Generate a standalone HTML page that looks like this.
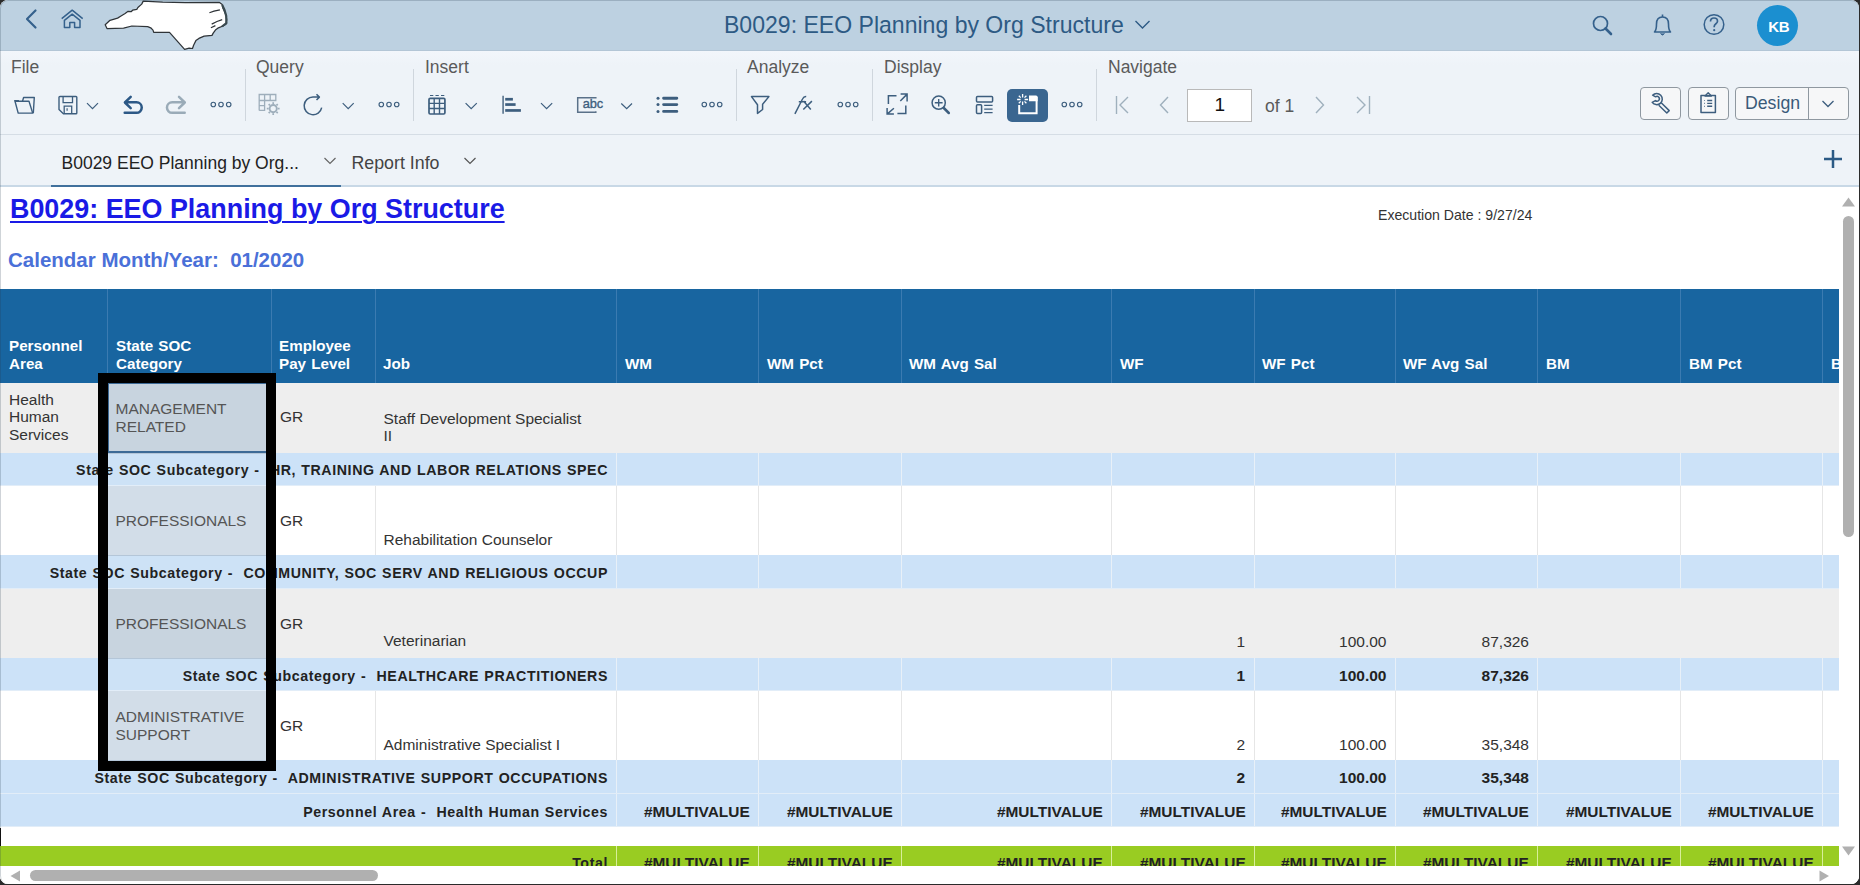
<!DOCTYPE html><html><head><meta charset="utf-8"><style>
*{box-sizing:border-box;margin:0;padding:0}
html,body{width:1860px;height:885px;overflow:hidden;background:#2b2b2b;font-family:"Liberation Sans",sans-serif}
.win{position:absolute;left:0;top:0;width:1859px;height:884px;border-radius:8px;overflow:hidden;background:#fff}
.rim{position:absolute;left:0;top:0;width:1859px;height:884px;border-radius:8px;border-top:1px solid rgba(40,60,80,0.22);border-left:1px solid rgba(40,60,80,0.22);pointer-events:none}
.a{position:absolute}
.t{position:absolute;white-space:nowrap;line-height:1}
svg{position:absolute;overflow:visible}
</style></head><body><div class="win">
<div class="a" style="left:0px;top:0px;width:1860px;height:51px;background:#bdd1e1"></div>
<svg style="left:20px;top:4px" width="24" height="28" viewBox="0 0 24 28"><path d="M15.5 6.5 L7 15 L15.5 23.5" stroke="#35618c" stroke-width="2.2" fill="none" stroke-linecap="round" stroke-linejoin="round"/></svg>
<svg style="left:0px;top:0px" width="120" height="60" viewBox="0 0 120 60"><path d="M61.7 18.6 L72.2 10.2 L82.7 18.6" stroke="#35618c" stroke-width="1.5" fill="none" stroke-linejoin="round"/><path d="M64.4 20.3 L72.2 14.2 L80 20.3 V27.5 H74.6 V22.4 H69.8 V27.5 H64.4 Z" stroke="#35618c" stroke-width="1.5" fill="none" stroke-linejoin="round"/></svg>
<svg style="left:0px;top:0px" width="300" height="60" viewBox="0 0 300 60"><path d="M143.2 1.1 L162.7 2.2 L185.3 2.6 L219.2 2.3 L222.2 4.5 L223 8.3 L226 15 L226.7 19.6 L226 24.1 L223 26 L218.4 27.8 L215.4 30.1 L213.2 33.1 L212 35.4 L204.1 36.1 L198.9 38.4 L195.9 40.6 L193.6 45.2 L192.5 48.5 L189.1 48.2 L184.6 49.3 L169.5 32.4 L153.7 32.4 L153 30.1 L150.7 27.8 L147.7 26.7 L131.9 26 L123.6 28.2 L107 28.6 L105.2 24.8 L110 20.3 L117.6 18.1 L120.6 16.2 L125.1 13.5 L128.1 11.3 L131.1 11.7 L132.6 10.2 L136.8 9.4 L137.9 7.5 L141.7 4.1 Z" fill="#fff" stroke="#2f3438" stroke-width="1.25" stroke-linejoin="round"/><path d="M209.4 12.8 L214 11.2 L219.9 9.8 M211.7 24.1 L217 21.5 L222.2 19.6 M210.9 27.8 L215.4 25.6" stroke="#2f3438" stroke-width="1.2" fill="none"/><path d="M222.2 5 L224.5 10 L226.2 16 L226.4 23 L222 26.5" stroke="#3a4a50" stroke-width="2.2" fill="none"/></svg>
<div class="t" style="left:724px;top:14.09px;font-size:23.05px;color:#2d5a84;font-weight:normal;">B0029: EEO Planning by Org Structure</div>
<svg style="left:1133px;top:18px" width="20" height="14" viewBox="0 0 20 14"><path d="M2.5 3 L9.5 10 L16.5 3" stroke="#2d5a84" stroke-width="1.4" fill="none"/></svg>
<svg style="left:1590px;top:13px" width="26" height="26" viewBox="0 0 26 26"><circle cx="10.5" cy="10.5" r="7" stroke="#35618c" stroke-width="1.7" fill="none"/><path d="M15.5 15.5 L21 21" stroke="#35618c" stroke-width="2.6" stroke-linecap="round"/></svg>
<svg style="left:1650px;top:12px" width="26" height="28" viewBox="0 0 26 28"><path d="M4.5 20 C6.5 18 6.5 16 6.5 12 C6.5 7.5 9 5 12.5 5 C16 5 18.5 7.5 18.5 12 C18.5 16 18.5 18 20.5 20 Z" stroke="#35618c" stroke-width="1.6" fill="none" stroke-linejoin="round"/><path d="M12.5 2.5 V5" stroke="#35618c" stroke-width="1.6"/><path d="M10.5 21.5 Q12.5 24.5 14.5 21.5" fill="#35618c" stroke="#35618c" stroke-width="1"/></svg>
<svg style="left:1700px;top:11px" width="28" height="28" viewBox="0 0 28 28"><circle cx="14" cy="13.5" r="9.8" stroke="#35618c" stroke-width="1.5" fill="none"/><path d="M10.5 10.5 C10.5 8 12 7 14 7 C16.3 7 17.5 8.5 17.5 10.2 C17.5 12.7 14.2 12.8 14.2 15.5 V16.2" stroke="#35618c" stroke-width="1.7" fill="none"/><circle cx="14.2" cy="19.2" r="1.1" fill="#35618c"/></svg>
<div class="a" style="left:1757px;top:5px;width:41px;height:41px;background:#1b8fd0;border-radius:50%"></div>
<div class="t" style="left:1768.3px;top:19.20px;font-size:15px;color:#fff;font-weight:bold;letter-spacing:-0.4px">KB</div>
<div class="a" style="left:0px;top:51px;width:1860px;height:84px;background:linear-gradient(#f2f6fb 0px,#eef3f8 14px)"></div>
<div class="a" style="left:0px;top:50px;width:1860px;height:1px;background:#b3c6d6"></div>
<div class="t" style="left:11px;top:58.59px;font-size:17.5px;color:#5a5a5a;font-weight:normal;">File</div>
<div class="t" style="left:256px;top:58.59px;font-size:17.5px;color:#5a5a5a;font-weight:normal;">Query</div>
<div class="t" style="left:425px;top:58.59px;font-size:17.5px;color:#5a5a5a;font-weight:normal;">Insert</div>
<div class="t" style="left:747px;top:58.59px;font-size:17.5px;color:#5a5a5a;font-weight:normal;">Analyze</div>
<div class="t" style="left:884px;top:58.59px;font-size:17.5px;color:#5a5a5a;font-weight:normal;">Display</div>
<div class="t" style="left:1108px;top:58.59px;font-size:17.5px;color:#5a5a5a;font-weight:normal;">Navigate</div>
<div class="a" style="left:245px;top:69px;width:1px;height:52px;background:#cfd6dd"></div>
<div class="a" style="left:413px;top:69px;width:1px;height:52px;background:#cfd6dd"></div>
<div class="a" style="left:736px;top:69px;width:1px;height:52px;background:#cfd6dd"></div>
<div class="a" style="left:872px;top:69px;width:1px;height:52px;background:#cfd6dd"></div>
<div class="a" style="left:1096px;top:69px;width:1px;height:52px;background:#cfd6dd"></div>
<svg style="left:0px;top:0px" width="1860" height="140" viewBox="0 0 1860 140"><path d="M15 101.3 H29 L32.7 113.1 H18.2 Z" stroke="#3d5e7e" fill="none" stroke-width="1.4" stroke-linejoin="round"/><path d="M14.2 100.6 H19 M22.5 101.3 L23.6 97.5 H34.3 L33.3 113.1" stroke="#3d5e7e" fill="none" stroke-width="1.4" stroke-linejoin="round"/><path d="M60 96.5 H76 Q76.8 96.5 76.8 97.3 V112.9 Q76.8 113.7 76 113.7 H63.4 L59 109.4 V97.3 Q59 96.5 60 96.5 Z" stroke="#3d5e7e" fill="none" stroke-width="1.4" stroke-linejoin="round"/><path d="M63.1 96.5 V102.6 H72.5 V96.5 M64.2 113.7 V106.1 H71.7 V113.7" stroke="#3d5e7e" fill="none" stroke-width="1.3"/><path d="M67.1 108.2 V110.8" stroke="#3d5e7e" stroke-width="1.2"/><path d="M87 103.2 L92.5 108.7 L98 103.2" stroke="#3d5e7e" fill="none" stroke-width="1.2"/><path d="M130.7 96.9 L124.9 102.5 L130.7 108.1 M125 102.3 H136.5 A5.25 5.25 0 0 1 136.5 112.8 H124.7" stroke="#2c5886" fill="none" stroke-width="2.5" stroke-linecap="round" stroke-linejoin="round"/><path d="M179 96.9 L184.8 102.5 L179 108.1 M184.7 102.3 H172.2 A5.25 5.25 0 0 0 172.2 112.8 H184.7" stroke="#9aabb8" fill="none" stroke-width="2.5" stroke-linecap="round" stroke-linejoin="round"/><path d="M259.2 110.4 V94.5 H275.8 V100.5 H259.2 M259.2 105.6 H265 M264.6 94.5 V110.4 H259.2 M270.2 94.5 V100.5" stroke="#9eaebb" fill="none" stroke-width="1.3"/><circle cx="273.2" cy="108.6" r="3.6" stroke="#9eaebb" fill="none" stroke-width="1.9"/><path d="M277.80 108.60 L279.60 108.60" stroke="#9eaebb" stroke-width="1.7"/><path d="M276.45 111.85 L277.73 113.13" stroke="#9eaebb" stroke-width="1.7"/><path d="M273.20 113.20 L273.20 115.00" stroke="#9eaebb" stroke-width="1.7"/><path d="M269.95 111.85 L268.67 113.13" stroke="#9eaebb" stroke-width="1.7"/><path d="M268.60 108.60 L266.80 108.60" stroke="#9eaebb" stroke-width="1.7"/><path d="M269.95 105.35 L268.67 104.07" stroke="#9eaebb" stroke-width="1.7"/><path d="M273.20 104.00 L273.20 102.20" stroke="#9eaebb" stroke-width="1.7"/><path d="M276.45 105.35 L277.73 104.07" stroke="#9eaebb" stroke-width="1.7"/><path d="M313 97 A8.85 8.85 0 1 0 321.7 107.6" stroke="#3d5e7e" fill="none" stroke-width="1.5"/><path d="M313 97 H319.3 M316.5 94.3 L319.4 97.1 L316.5 100" stroke="#3d5e7e" fill="none" stroke-width="1.5" stroke-linejoin="round"/><path d="M342.7 103.2 L348.2 108.7 L353.7 103.2" stroke="#3d5e7e" fill="none" stroke-width="1.2"/><path d="M430 95.5 H433.3 M435.5 95.5 H438.8 M441 95.5 H444.3" stroke="#3d5e7e" stroke-width="1.2"/><rect x="429" y="98.4" width="15.9" height="15.6" rx="1.2" stroke="#3d5e7e" fill="none" stroke-width="1.7"/><path d="M429 103.4 H444.9 M429 108.5 H444.9 M434.2 98.4 V114 M439.5 98.4 V114" stroke="#3d5e7e" stroke-width="1.4"/><path d="M465.6 103.1 L471.2 108.7 L476.8 103.1" stroke="#3d5e7e" fill="none" stroke-width="1.2"/><path d="M503.1 95.7 V113.7" stroke="#5f7a93" stroke-width="1.7"/><rect x="505.2" y="97.9" width="7.7" height="2.7" fill="#3d5e7e"/><rect x="505.2" y="103.2" width="10.4" height="2.7" fill="#3d5e7e"/><rect x="505.2" y="109.1" width="15.7" height="2.7" fill="#3d5e7e"/><path d="M541 103.1 L546.6 108.7 L552.2 103.1" stroke="#3d5e7e" fill="none" stroke-width="1.2"/><path d="M595.8 98.6 V97.7 H577.7 V112.2 H595.8 V111.3" stroke="#5a7189" fill="none" stroke-width="1.5"/><text x="582.8" y="107.8" font-family="Liberation Sans" font-size="12.8" fill="#3d5e7e" stroke="#3d5e7e" stroke-width="0.35" letter-spacing="-0.2">abc</text><path d="M621.3 103.5 L626.7 108.7 L632 103.5" stroke="#3d5e7e" fill="none" stroke-width="1.2"/><circle cx="658" cy="98.3" r="1.5" fill="#3d5e7e"/><circle cx="658" cy="104.6" r="1.5" fill="#3d5e7e"/><circle cx="658" cy="111.4" r="1.5" fill="#3d5e7e"/><path d="M663.6 98.3 H676.8 M663.6 104.6 H676.8 M663.6 111.4 H676.8" stroke="#3d5e7e" stroke-width="2.9" stroke-linecap="round"/><path d="M751.5 96.6 H768.9 L762.6 104.3 V109.5 L757.5 113.4 V104.8 Z" stroke="#3d5e7e" fill="none" stroke-width="1.5" stroke-linejoin="round"/><path d="M794.9 113.8 L802.5 99 Q803.8 96.2 806.2 96.4" stroke="#3d5e7e" fill="none" stroke-width="1.5"/><path d="M798.8 101.8 H806.1 M803.5 100.9 L810.8 109.5 M811.9 101.1 L803.3 109.5" stroke="#3d5e7e" fill="none" stroke-width="1.5"/><path d="M888.4 104.1 V95.8 H896.5 M900.6 94.1 H907.1 V101.5 M907.1 94.1 L900.3 101 M905.8 105.4 V113.5 H897.4 M893.9 114.1 H887.1 V108 M887.1 114.1 L893.9 108.3" stroke="#3d5e7e" fill="none" stroke-width="1.5"/><circle cx="938.7" cy="102.7" r="6.6" stroke="#3d5e7e" fill="none" stroke-width="1.5"/><path d="M934.8 102.7 H942.6 M938.7 98.9 V106.5" stroke="#3d5e7e" fill="none" stroke-width="1.4"/><path d="M943.8 108 L948.8 113" stroke="#3d5e7e" stroke-width="2.5" stroke-linecap="round"/><rect x="976.5" y="96.4" width="16.1" height="5.5" rx="1" stroke="#3d5e7e" fill="none" stroke-width="1.5"/><rect x="976.5" y="104.8" width="5.1" height="8.7" rx="1" stroke="#3d5e7e" fill="none" stroke-width="1.5"/><path d="M984.2 105.4 H992.6 M984.2 109.1 H992.6 M984.2 112.6 H992.6" stroke="#3d5e7e" fill="none" stroke-width="1.4"/><circle cx="213.3" cy="104.5" r="2.25" stroke="#3d5e7e" fill="none" stroke-width="1.15"/><circle cx="221" cy="104.5" r="2.25" stroke="#3d5e7e" fill="none" stroke-width="1.15"/><circle cx="228.7" cy="104.5" r="2.25" stroke="#3d5e7e" fill="none" stroke-width="1.15"/><circle cx="381.3" cy="104.5" r="2.25" stroke="#3d5e7e" fill="none" stroke-width="1.15"/><circle cx="389" cy="104.5" r="2.25" stroke="#3d5e7e" fill="none" stroke-width="1.15"/><circle cx="396.7" cy="104.5" r="2.25" stroke="#3d5e7e" fill="none" stroke-width="1.15"/><circle cx="704.3" cy="104.5" r="2.25" stroke="#3d5e7e" fill="none" stroke-width="1.15"/><circle cx="712" cy="104.5" r="2.25" stroke="#3d5e7e" fill="none" stroke-width="1.15"/><circle cx="719.7" cy="104.5" r="2.25" stroke="#3d5e7e" fill="none" stroke-width="1.15"/><circle cx="840.3" cy="104.5" r="2.25" stroke="#3d5e7e" fill="none" stroke-width="1.15"/><circle cx="848" cy="104.5" r="2.25" stroke="#3d5e7e" fill="none" stroke-width="1.15"/><circle cx="855.7" cy="104.5" r="2.25" stroke="#3d5e7e" fill="none" stroke-width="1.15"/><circle cx="1064.3" cy="104.5" r="2.25" stroke="#3d5e7e" fill="none" stroke-width="1.15"/><circle cx="1072" cy="104.5" r="2.25" stroke="#3d5e7e" fill="none" stroke-width="1.15"/><circle cx="1079.7" cy="104.5" r="2.25" stroke="#3d5e7e" fill="none" stroke-width="1.15"/></svg>
<div class="a" style="left:1007px;top:89px;width:41px;height:33px;background:#3a6690;border-radius:5px"></div>
<svg style="left:0px;top:0px" width="1860" height="140" viewBox="0 0 1860 140"><path d="M1019.2 105 V113.2 H1036.6 V96.6" stroke="#fff" fill="none" stroke-width="2"/><path d="M1029 95.5 H1036.4 L1037.6 97 V101.3 H1029 Z" fill="#fff"/><path d="M1022.6 94 V97.5 M1022.6 101.5 V105 M1017.1 99.5 H1020.6 M1024.6 99.5 H1028.1 M1018.8 95.7 L1020.7 97.6 M1024.5 101.4 L1026.4 103.3 M1026.4 95.7 L1024.5 97.6 M1020.7 101.4 L1018.8 103.3" stroke="#fff" stroke-width="1.3"/></svg>
<svg style="left:1113px;top:94px" width="22" height="22" viewBox="0 0 22 22"><path d="M3.5 2 V20" stroke="#9fb0bd" stroke-width="1.4"/><path d="M15 3 L7 11 L15 19" stroke="#9fb0bd" stroke-width="1.4" fill="none"/></svg>
<svg style="left:1154px;top:94px" width="22" height="22" viewBox="0 0 22 22"><path d="M14 3 L6.5 11 L14 19" stroke="#9fb0bd" stroke-width="1.4" fill="none"/></svg>
<div class="a" style="left:1187px;top:89px;width:65px;height:33px;background:#fff;border:1px solid #b9b9b9"></div>
<div class="t" style="left:1214.5px;top:95.12px;font-size:19px;color:#111;font-weight:normal;">1</div>
<div class="t" style="left:1265px;top:98.09px;font-size:17.5px;color:#5a5a5a;font-weight:normal;">of 1</div>
<svg style="left:1309px;top:94px" width="22" height="22" viewBox="0 0 22 22"><path d="M7 3 L14.5 11 L7 19" stroke="#9fb0bd" stroke-width="1.4" fill="none"/></svg>
<svg style="left:1352px;top:94px" width="22" height="22" viewBox="0 0 22 22"><path d="M5 3 L13 11 L5 19" stroke="#9fb0bd" stroke-width="1.4" fill="none"/><path d="M17.5 2 V20" stroke="#9fb0bd" stroke-width="1.4"/></svg>
<div class="a" style="left:1640px;top:87px;width:41px;height:33px;background:#f6f7f8;border:1px solid #8f98a0;border-radius:4px"></div>
<svg style="left:0px;top:0px" width="1860" height="140" viewBox="0 0 1860 140"><path d="M1652.6 95.2 A5.6 5.6 0 1 1 1652.2 102.4 L1655.4 100.6 A2.4 2.4 0 1 0 1655.6 96.8 Z" stroke="#3d5e7e" fill="none" stroke-width="1.5" stroke-linejoin="round"/><path d="M1661.2 102.8 L1669.2 110.6 L1666.8 113 L1658.8 105.2" stroke="#3d5e7e" fill="none" stroke-width="1.5" stroke-linejoin="round"/></svg>
<div class="a" style="left:1688px;top:87px;width:41px;height:33px;background:#f6f7f8;border:1px solid #8f98a0;border-radius:4px"></div>
<svg style="left:0px;top:0px" width="1860" height="140" viewBox="0 0 1860 140"><path d="M1701 95.6 H1715.4 V112.6 H1701 Z" stroke="#3d5e7e" fill="none" stroke-width="1.5" stroke-linejoin="round"/><path d="M1705 96 L1708.2 92.6 L1711.4 96 Z" stroke="#3d5e7e" fill="none" stroke-width="1.3" stroke-linejoin="round"/><path d="M1704 100.5 H1705 M1704 103.4 H1705 M1704 106.3 H1705" stroke="#7a90a4" stroke-width="1.2"/><path d="M1707.2 100.5 H1712.2 M1707.2 103.4 H1712.2 M1707.2 106.3 H1712.2" stroke="#3d5e7e" stroke-width="1.4"/></svg>
<div class="a" style="left:1735px;top:87px;width:114px;height:33px;background:#f6f7f8;border:1px solid #8f98a0;border-radius:4px"></div>
<div class="a" style="left:1808px;top:88px;width:1px;height:31px;background:#8f98a0"></div>
<div class="t" style="left:1745px;top:94.92px;font-size:17.7px;color:#3a5a78;font-weight:normal;">Design</div>
<svg style="left:1821px;top:99px" width="14" height="10" viewBox="0 0 14 10"><path d="M1.5 2 L7 7.5 L12.5 2" stroke="#3d5e7e" stroke-width="1.3" fill="none"/></svg>
<div class="a" style="left:0px;top:134px;width:1860px;height:1px;background:#d5dde5"></div>
<div class="a" style="left:0px;top:135px;width:1860px;height:51px;background:#eef3f8"></div>
<div class="a" style="left:0px;top:185px;width:1860px;height:2px;background:#c8d8e6"></div>
<div class="t" style="left:61.5px;top:155.39px;font-size:17.5px;color:#222;font-weight:normal;">B0029 EEO Planning by Org...</div>
<svg style="left:323px;top:156px" width="14" height="10" viewBox="0 0 14 10"><path d="M1.5 2 L7 7.5 L12.5 2" stroke="#666" stroke-width="1.2" fill="none"/></svg>
<div class="t" style="left:351.5px;top:155.13px;font-size:17.8px;color:#444;font-weight:normal;">Report Info</div>
<svg style="left:463px;top:156px" width="14" height="10" viewBox="0 0 14 10"><path d="M1.5 2 L7 7.5 L12.5 2" stroke="#555" stroke-width="1.2" fill="none"/></svg>
<div class="a" style="left:51px;top:185px;width:290px;height:2px;background:#40709c"></div>
<svg style="left:1822px;top:148px" width="22" height="22" viewBox="0 0 22 22"><path d="M11 2 V20 M2 11 H20" stroke="#2b5a85" stroke-width="2.5"/></svg>
<div class="a" style="left:0px;top:187px;width:1860px;height:697px;background:#fff"></div>
<div class="t" style="left:10px;top:196.43px;font-size:26.9px;color:#1a1ae6;font-weight:bold;text-decoration:underline;text-decoration-thickness:2px;text-underline-offset:3px">B0029: EEO Planning by Org Structure</div>
<div class="t" style="left:8px;top:249.55px;font-size:20.5px;color:#4a70d8;font-weight:bold;">Calendar Month/Year:&nbsp; 01/2020</div>
<div class="t" style="left:1378px;top:208.46px;font-size:14.1px;color:#333;font-weight:normal;">Execution Date : 9/27/24</div>
<div class="a" style="left:0px;top:289px;width:1839px;height:94px;background:#1865a0"></div>
<div class="a" style="left:107px;top:289px;width:1px;height:94px;background:#3b7bb1"></div>
<div class="a" style="left:271px;top:289px;width:1px;height:94px;background:#3b7bb1"></div>
<div class="a" style="left:375px;top:289px;width:1px;height:94px;background:#3b7bb1"></div>
<div class="a" style="left:616px;top:289px;width:1px;height:94px;background:#3b7bb1"></div>
<div class="a" style="left:758px;top:289px;width:1px;height:94px;background:#3b7bb1"></div>
<div class="a" style="left:901px;top:289px;width:1px;height:94px;background:#3b7bb1"></div>
<div class="a" style="left:1111px;top:289px;width:1px;height:94px;background:#3b7bb1"></div>
<div class="a" style="left:1254px;top:289px;width:1px;height:94px;background:#3b7bb1"></div>
<div class="a" style="left:1395px;top:289px;width:1px;height:94px;background:#3b7bb1"></div>
<div class="a" style="left:1537px;top:289px;width:1px;height:94px;background:#3b7bb1"></div>
<div class="a" style="left:1680px;top:289px;width:1px;height:94px;background:#3b7bb1"></div>
<div class="a" style="left:1822px;top:289px;width:1px;height:94px;background:#3b7bb1"></div>
<div class="t" style="left:9px;top:337.83px;font-size:15.2px;color:#fff;font-weight:bold;word-spacing:1px">Personnel</div>
<div class="t" style="left:9px;top:355.83px;font-size:15.2px;color:#fff;font-weight:bold;word-spacing:1px">Area</div>
<div class="t" style="left:116px;top:337.83px;font-size:15.2px;color:#fff;font-weight:bold;word-spacing:1px">State SOC</div>
<div class="t" style="left:116px;top:355.83px;font-size:15.2px;color:#fff;font-weight:bold;word-spacing:1px">Category</div>
<div class="t" style="left:279px;top:337.83px;font-size:15.2px;color:#fff;font-weight:bold;word-spacing:1px">Employee</div>
<div class="t" style="left:279px;top:355.83px;font-size:15.2px;color:#fff;font-weight:bold;word-spacing:1px">Pay Level</div>
<div class="t" style="left:383px;top:355.83px;font-size:15.2px;color:#fff;font-weight:bold;word-spacing:1px">Job</div>
<div class="t" style="left:625px;top:355.83px;font-size:15.2px;color:#fff;font-weight:bold;word-spacing:1px">WM</div>
<div class="t" style="left:767px;top:355.83px;font-size:15.2px;color:#fff;font-weight:bold;word-spacing:1px">WM Pct</div>
<div class="t" style="left:909px;top:355.83px;font-size:15.2px;color:#fff;font-weight:bold;word-spacing:1px">WM Avg Sal</div>
<div class="t" style="left:1120px;top:355.83px;font-size:15.2px;color:#fff;font-weight:bold;word-spacing:1px">WF</div>
<div class="t" style="left:1262px;top:355.83px;font-size:15.2px;color:#fff;font-weight:bold;word-spacing:1px">WF Pct</div>
<div class="t" style="left:1403px;top:355.83px;font-size:15.2px;color:#fff;font-weight:bold;word-spacing:1px">WF Avg Sal</div>
<div class="t" style="left:1546px;top:355.83px;font-size:15.2px;color:#fff;font-weight:bold;word-spacing:1px">BM</div>
<div class="t" style="left:1689px;top:355.83px;font-size:15.2px;color:#fff;font-weight:bold;word-spacing:1px">BM Pct</div>
<div class="t" style="left:1831px;top:355.83px;font-size:15.2px;color:#fff;font-weight:bold;word-spacing:1px">B</div>
<div class="a" style="left:0px;top:383px;width:1839px;height:70px;background:#eeeeee"></div>
<div class="a" style="left:0px;top:453px;width:1839px;height:33px;background:#cce2f8"></div>
<div class="a" style="left:616px;top:453px;width:1px;height:33px;background:#e8f0f8"></div>
<div class="a" style="left:758px;top:453px;width:1px;height:33px;background:#e8f0f8"></div>
<div class="a" style="left:901px;top:453px;width:1px;height:33px;background:#e8f0f8"></div>
<div class="a" style="left:1111px;top:453px;width:1px;height:33px;background:#e8f0f8"></div>
<div class="a" style="left:1254px;top:453px;width:1px;height:33px;background:#e8f0f8"></div>
<div class="a" style="left:1395px;top:453px;width:1px;height:33px;background:#e8f0f8"></div>
<div class="a" style="left:1537px;top:453px;width:1px;height:33px;background:#e8f0f8"></div>
<div class="a" style="left:1680px;top:453px;width:1px;height:33px;background:#e8f0f8"></div>
<div class="a" style="left:1822px;top:453px;width:1px;height:33px;background:#e8f0f8"></div>
<div class="a" style="left:0px;top:485px;width:1839px;height:1px;background:#e2edf8"></div>
<div class="a" style="left:0px;top:486px;width:1839px;height:69px;background:#ffffff"></div>
<div class="a" style="left:107px;top:486px;width:1px;height:69px;background:#e6e6e6"></div>
<div class="a" style="left:271px;top:486px;width:1px;height:69px;background:#e6e6e6"></div>
<div class="a" style="left:375px;top:486px;width:1px;height:69px;background:#e6e6e6"></div>
<div class="a" style="left:616px;top:486px;width:1px;height:69px;background:#e6e6e6"></div>
<div class="a" style="left:758px;top:486px;width:1px;height:69px;background:#e6e6e6"></div>
<div class="a" style="left:901px;top:486px;width:1px;height:69px;background:#e6e6e6"></div>
<div class="a" style="left:1111px;top:486px;width:1px;height:69px;background:#e6e6e6"></div>
<div class="a" style="left:1254px;top:486px;width:1px;height:69px;background:#e6e6e6"></div>
<div class="a" style="left:1395px;top:486px;width:1px;height:69px;background:#e6e6e6"></div>
<div class="a" style="left:1537px;top:486px;width:1px;height:69px;background:#e6e6e6"></div>
<div class="a" style="left:1680px;top:486px;width:1px;height:69px;background:#e6e6e6"></div>
<div class="a" style="left:1822px;top:486px;width:1px;height:69px;background:#e6e6e6"></div>
<div class="a" style="left:0px;top:555px;width:1839px;height:34px;background:#cce2f8"></div>
<div class="a" style="left:616px;top:555px;width:1px;height:34px;background:#e8f0f8"></div>
<div class="a" style="left:758px;top:555px;width:1px;height:34px;background:#e8f0f8"></div>
<div class="a" style="left:901px;top:555px;width:1px;height:34px;background:#e8f0f8"></div>
<div class="a" style="left:1111px;top:555px;width:1px;height:34px;background:#e8f0f8"></div>
<div class="a" style="left:1254px;top:555px;width:1px;height:34px;background:#e8f0f8"></div>
<div class="a" style="left:1395px;top:555px;width:1px;height:34px;background:#e8f0f8"></div>
<div class="a" style="left:1537px;top:555px;width:1px;height:34px;background:#e8f0f8"></div>
<div class="a" style="left:1680px;top:555px;width:1px;height:34px;background:#e8f0f8"></div>
<div class="a" style="left:1822px;top:555px;width:1px;height:34px;background:#e8f0f8"></div>
<div class="a" style="left:0px;top:588px;width:1839px;height:1px;background:#e2edf8"></div>
<div class="a" style="left:0px;top:589px;width:1839px;height:69px;background:#eeeeee"></div>
<div class="a" style="left:0px;top:658px;width:1839px;height:33px;background:#cce2f8"></div>
<div class="a" style="left:616px;top:658px;width:1px;height:33px;background:#e8f0f8"></div>
<div class="a" style="left:758px;top:658px;width:1px;height:33px;background:#e8f0f8"></div>
<div class="a" style="left:901px;top:658px;width:1px;height:33px;background:#e8f0f8"></div>
<div class="a" style="left:1111px;top:658px;width:1px;height:33px;background:#e8f0f8"></div>
<div class="a" style="left:1254px;top:658px;width:1px;height:33px;background:#e8f0f8"></div>
<div class="a" style="left:1395px;top:658px;width:1px;height:33px;background:#e8f0f8"></div>
<div class="a" style="left:1537px;top:658px;width:1px;height:33px;background:#e8f0f8"></div>
<div class="a" style="left:1680px;top:658px;width:1px;height:33px;background:#e8f0f8"></div>
<div class="a" style="left:1822px;top:658px;width:1px;height:33px;background:#e8f0f8"></div>
<div class="a" style="left:0px;top:690px;width:1839px;height:1px;background:#e2edf8"></div>
<div class="a" style="left:0px;top:691px;width:1839px;height:69px;background:#ffffff"></div>
<div class="a" style="left:107px;top:691px;width:1px;height:69px;background:#e6e6e6"></div>
<div class="a" style="left:271px;top:691px;width:1px;height:69px;background:#e6e6e6"></div>
<div class="a" style="left:375px;top:691px;width:1px;height:69px;background:#e6e6e6"></div>
<div class="a" style="left:616px;top:691px;width:1px;height:69px;background:#e6e6e6"></div>
<div class="a" style="left:758px;top:691px;width:1px;height:69px;background:#e6e6e6"></div>
<div class="a" style="left:901px;top:691px;width:1px;height:69px;background:#e6e6e6"></div>
<div class="a" style="left:1111px;top:691px;width:1px;height:69px;background:#e6e6e6"></div>
<div class="a" style="left:1254px;top:691px;width:1px;height:69px;background:#e6e6e6"></div>
<div class="a" style="left:1395px;top:691px;width:1px;height:69px;background:#e6e6e6"></div>
<div class="a" style="left:1537px;top:691px;width:1px;height:69px;background:#e6e6e6"></div>
<div class="a" style="left:1680px;top:691px;width:1px;height:69px;background:#e6e6e6"></div>
<div class="a" style="left:1822px;top:691px;width:1px;height:69px;background:#e6e6e6"></div>
<div class="a" style="left:0px;top:760px;width:1839px;height:34px;background:#cce2f8"></div>
<div class="a" style="left:616px;top:760px;width:1px;height:34px;background:#e8f0f8"></div>
<div class="a" style="left:758px;top:760px;width:1px;height:34px;background:#e8f0f8"></div>
<div class="a" style="left:901px;top:760px;width:1px;height:34px;background:#e8f0f8"></div>
<div class="a" style="left:1111px;top:760px;width:1px;height:34px;background:#e8f0f8"></div>
<div class="a" style="left:1254px;top:760px;width:1px;height:34px;background:#e8f0f8"></div>
<div class="a" style="left:1395px;top:760px;width:1px;height:34px;background:#e8f0f8"></div>
<div class="a" style="left:1537px;top:760px;width:1px;height:34px;background:#e8f0f8"></div>
<div class="a" style="left:1680px;top:760px;width:1px;height:34px;background:#e8f0f8"></div>
<div class="a" style="left:1822px;top:760px;width:1px;height:34px;background:#e8f0f8"></div>
<div class="a" style="left:0px;top:793px;width:1839px;height:1px;background:#e2edf8"></div>
<div class="a" style="left:0px;top:794px;width:1839px;height:33px;background:#cce2f8"></div>
<div class="a" style="left:616px;top:794px;width:1px;height:33px;background:#e8f0f8"></div>
<div class="a" style="left:758px;top:794px;width:1px;height:33px;background:#e8f0f8"></div>
<div class="a" style="left:901px;top:794px;width:1px;height:33px;background:#e8f0f8"></div>
<div class="a" style="left:1111px;top:794px;width:1px;height:33px;background:#e8f0f8"></div>
<div class="a" style="left:1254px;top:794px;width:1px;height:33px;background:#e8f0f8"></div>
<div class="a" style="left:1395px;top:794px;width:1px;height:33px;background:#e8f0f8"></div>
<div class="a" style="left:1537px;top:794px;width:1px;height:33px;background:#e8f0f8"></div>
<div class="a" style="left:1680px;top:794px;width:1px;height:33px;background:#e8f0f8"></div>
<div class="a" style="left:1822px;top:794px;width:1px;height:33px;background:#e8f0f8"></div>
<div class="a" style="left:0px;top:826px;width:1839px;height:1px;background:#e2edf8"></div>
<div class="a" style="left:108px;top:383px;width:158px;height:70px;background:#c8d4df"></div>
<div class="a" style="left:108px;top:453px;width:158px;height:32px;background:#cde2f6"></div>
<div class="a" style="left:108px;top:453px;width:158px;height:1px;background:#b4c6d8"></div>
<div class="a" style="left:108px;top:486px;width:158px;height:69px;background:#d2dde8"></div>
<div class="a" style="left:108px;top:555px;width:158px;height:33px;background:#cde2f6"></div>
<div class="a" style="left:108px;top:555px;width:158px;height:1px;background:#b4c6d8"></div>
<div class="a" style="left:108px;top:589px;width:158px;height:69px;background:#c8d4df"></div>
<div class="a" style="left:108px;top:658px;width:158px;height:32px;background:#cde2f6"></div>
<div class="a" style="left:108px;top:658px;width:158px;height:1px;background:#b4c6d8"></div>
<div class="a" style="left:108px;top:691px;width:158px;height:69px;background:#d2dde8"></div>
<div class="a" style="left:108px;top:760px;width:158px;height:33px;background:#cde2f6"></div>
<div class="a" style="left:108px;top:760px;width:158px;height:1px;background:#b4c6d8"></div>
<div class="a" style="left:108px;top:383px;width:158px;height:1px;background:#3d6a96"></div>
<div class="a" style="left:108px;top:383px;width:1px;height:70px;background:#3d6a96"></div>
<div class="a" style="left:108px;top:451px;width:158px;height:2px;background:#3d6a96"></div>
<div class="a" style="left:0px;top:827px;width:1839px;height:19px;background:#fff"></div>
<div class="a" style="left:0px;top:846px;width:1839px;height:20px;background:#99cc22"></div>
<div class="a" style="left:616px;top:846px;width:1px;height:20px;background:#d8ee9a"></div>
<div class="a" style="left:758px;top:846px;width:1px;height:20px;background:#d8ee9a"></div>
<div class="a" style="left:901px;top:846px;width:1px;height:20px;background:#d8ee9a"></div>
<div class="a" style="left:1111px;top:846px;width:1px;height:20px;background:#d8ee9a"></div>
<div class="a" style="left:1254px;top:846px;width:1px;height:20px;background:#d8ee9a"></div>
<div class="a" style="left:1395px;top:846px;width:1px;height:20px;background:#d8ee9a"></div>
<div class="a" style="left:1537px;top:846px;width:1px;height:20px;background:#d8ee9a"></div>
<div class="a" style="left:1680px;top:846px;width:1px;height:20px;background:#d8ee9a"></div>
<div class="a" style="left:1822px;top:846px;width:1px;height:20px;background:#d8ee9a"></div>
<div class="t" style="left:9px;top:391.68px;font-size:15.5px;color:#333;font-weight:normal;">Health</div>
<div class="t" style="left:9px;top:409.48px;font-size:15.5px;color:#333;font-weight:normal;">Human</div>
<div class="t" style="left:9px;top:427.28px;font-size:15.5px;color:#333;font-weight:normal;">Services</div>
<div class="t" style="left:115.5px;top:400.78px;font-size:15.5px;color:#555;font-weight:normal;">MANAGEMENT</div>
<div class="t" style="left:115.5px;top:418.78px;font-size:15.5px;color:#555;font-weight:normal;">RELATED</div>
<div class="t" style="left:280px;top:409.48px;font-size:15.5px;color:#333;font-weight:normal;">GR</div>
<div class="t" style="left:383.5px;top:410.78px;font-size:15.5px;color:#333;font-weight:normal;">Staff Development Specialist</div>
<div class="t" style="left:383.5px;top:428.48px;font-size:15.5px;color:#333;font-weight:normal;">II</div>
<div class="t" style="right:1251px;top:462.88px;font-size:14.2px;color:#222;font-weight:bold;letter-spacing:0.6px;word-spacing:0.6px">State SOC Subcategory -&nbsp; HR, TRAINING AND LABOR RELATIONS SPEC</div>
<div class="t" style="left:115.5px;top:512.78px;font-size:15.5px;color:#555;font-weight:normal;">PROFESSIONALS</div>
<div class="t" style="left:280px;top:512.78px;font-size:15.5px;color:#333;font-weight:normal;">GR</div>
<div class="t" style="left:383.5px;top:531.78px;font-size:15.5px;color:#333;font-weight:normal;">Rehabilitation Counselor</div>
<div class="t" style="right:1251px;top:565.88px;font-size:14.2px;color:#222;font-weight:bold;letter-spacing:0.6px;word-spacing:0.6px">State SOC Subcategory -&nbsp; COMMUNITY, SOC SERV AND RELIGIOUS OCCUP</div>
<div class="t" style="left:115.5px;top:615.78px;font-size:15.5px;color:#555;font-weight:normal;">PROFESSIONALS</div>
<div class="t" style="left:280px;top:615.78px;font-size:15.5px;color:#333;font-weight:normal;">GR</div>
<div class="t" style="left:383.5px;top:633.48px;font-size:15.5px;color:#333;font-weight:normal;">Veterinarian</div>
<div class="t" style="right:614px;top:633.78px;font-size:15.5px;color:#333;font-weight:normal;">1</div>
<div class="t" style="right:472.5px;top:633.78px;font-size:15.5px;color:#333;font-weight:normal;">100.00</div>
<div class="t" style="right:330px;top:633.78px;font-size:15.5px;color:#333;font-weight:normal;">87,326</div>
<div class="t" style="right:1251px;top:668.88px;font-size:14.2px;color:#222;font-weight:bold;letter-spacing:0.6px;word-spacing:0.6px">State SOC Subcategory -&nbsp; HEALTHCARE PRACTITIONERS</div>
<div class="t" style="right:614px;top:667.78px;font-size:15.5px;color:#222;font-weight:bold;">1</div>
<div class="t" style="right:472.5px;top:667.78px;font-size:15.5px;color:#222;font-weight:bold;">100.00</div>
<div class="t" style="right:330px;top:667.78px;font-size:15.5px;color:#222;font-weight:bold;">87,326</div>
<div class="t" style="left:115.5px;top:708.78px;font-size:15.5px;color:#555;font-weight:normal;">ADMINISTRATIVE</div>
<div class="t" style="left:115.5px;top:726.78px;font-size:15.5px;color:#555;font-weight:normal;">SUPPORT</div>
<div class="t" style="left:280px;top:717.78px;font-size:15.5px;color:#333;font-weight:normal;">GR</div>
<div class="t" style="left:383.5px;top:736.78px;font-size:15.5px;color:#333;font-weight:normal;">Administrative Specialist I</div>
<div class="t" style="right:614px;top:737.18px;font-size:15.5px;color:#333;font-weight:normal;">2</div>
<div class="t" style="right:472.5px;top:737.18px;font-size:15.5px;color:#333;font-weight:normal;">100.00</div>
<div class="t" style="right:330px;top:737.18px;font-size:15.5px;color:#333;font-weight:normal;">35,348</div>
<div class="t" style="right:1251px;top:770.88px;font-size:14.2px;color:#222;font-weight:bold;letter-spacing:0.6px;word-spacing:0.6px">State SOC Subcategory -&nbsp; ADMINISTRATIVE SUPPORT OCCUPATIONS</div>
<div class="t" style="right:614px;top:769.78px;font-size:15.5px;color:#222;font-weight:bold;">2</div>
<div class="t" style="right:472.5px;top:769.78px;font-size:15.5px;color:#222;font-weight:bold;">100.00</div>
<div class="t" style="right:330px;top:769.78px;font-size:15.5px;color:#222;font-weight:bold;">35,348</div>
<div class="t" style="right:1251px;top:804.88px;font-size:14.2px;color:#222;font-weight:bold;letter-spacing:0.6px;word-spacing:0.6px">Personnel Area -&nbsp; Health Human Services</div>
<div class="t" style="right:1109.3px;top:803.62px;font-size:15.45px;color:#222;font-weight:bold;">#MULTIVALUE</div>
<div class="t" style="right:966.3px;top:803.62px;font-size:15.45px;color:#222;font-weight:bold;">#MULTIVALUE</div>
<div class="t" style="right:756.3px;top:803.62px;font-size:15.45px;color:#222;font-weight:bold;">#MULTIVALUE</div>
<div class="t" style="right:613.3px;top:803.62px;font-size:15.45px;color:#222;font-weight:bold;">#MULTIVALUE</div>
<div class="t" style="right:472.29999999999995px;top:803.62px;font-size:15.45px;color:#222;font-weight:bold;">#MULTIVALUE</div>
<div class="t" style="right:330.29999999999995px;top:803.62px;font-size:15.45px;color:#222;font-weight:bold;">#MULTIVALUE</div>
<div class="t" style="right:187.29999999999995px;top:803.62px;font-size:15.45px;color:#222;font-weight:bold;">#MULTIVALUE</div>
<div class="t" style="right:45.299999999999955px;top:803.62px;font-size:15.45px;color:#222;font-weight:bold;">#MULTIVALUE</div>
<div class="a" style="left:0;top:846px;width:1839px;height:20px;overflow:hidden">
<div class="t" style="right:1231px;top:9.98px;font-size:14.2px;color:#222;font-weight:bold;letter-spacing:0.6px;word-spacing:0.6px">Total</div>
<div class="t" style="right:1089.3px;top:9.42px;font-size:15.45px;color:#222;font-weight:bold;">#MULTIVALUE</div>
<div class="t" style="right:946.3px;top:9.42px;font-size:15.45px;color:#222;font-weight:bold;">#MULTIVALUE</div>
<div class="t" style="right:736.3px;top:9.42px;font-size:15.45px;color:#222;font-weight:bold;">#MULTIVALUE</div>
<div class="t" style="right:593.3px;top:9.42px;font-size:15.45px;color:#222;font-weight:bold;">#MULTIVALUE</div>
<div class="t" style="right:452.29999999999995px;top:9.42px;font-size:15.45px;color:#222;font-weight:bold;">#MULTIVALUE</div>
<div class="t" style="right:310.29999999999995px;top:9.42px;font-size:15.45px;color:#222;font-weight:bold;">#MULTIVALUE</div>
<div class="t" style="right:167.29999999999995px;top:9.42px;font-size:15.45px;color:#222;font-weight:bold;">#MULTIVALUE</div>
<div class="t" style="right:25.299999999999955px;top:9.42px;font-size:15.45px;color:#222;font-weight:bold;">#MULTIVALUE</div>
</div>
<div class="a" style="left:98px;top:373px;width:178px;height:398px;border:10px solid #000"></div>
<div class="a" style="left:1840px;top:187px;width:19px;height:679px;background:#fff"></div>
<svg style="left:1842px;top:197px" width="14" height="10" viewBox="0 0 14 10"><path d="M6.5 0.5 L13 9.5 H0 Z" fill="#b0b0b0"/></svg>
<div class="a" style="left:1843px;top:216px;width:11px;height:321px;background:#b0b0b0;border-radius:6px"></div>
<svg style="left:1842px;top:846px" width="14" height="10" viewBox="0 0 14 10"><path d="M0 0.5 H13 L6.5 9.5 Z" fill="#b0b0b0"/></svg>
<div class="a" style="left:0px;top:866px;width:1860px;height:18px;background:#fff"></div>
<svg style="left:10px;top:870px" width="11" height="12" viewBox="0 0 11 12"><path d="M10 0.5 V11.5 L0.5 6 Z" fill="#b0b0b0"/></svg>
<div class="a" style="left:30px;top:870px;width:348px;height:11px;background:#b0b0b0;border-radius:6px"></div>
<svg style="left:1819px;top:870px" width="11" height="12" viewBox="0 0 11 12"><path d="M0.5 0.5 V11.5 L10 6 Z" fill="#b0b0b0"/></svg>
<div class="rim"></div>
<div class="a" style="left:0px;top:828px;width:1px;height:18px;background:#111"></div>
</div></body></html>
